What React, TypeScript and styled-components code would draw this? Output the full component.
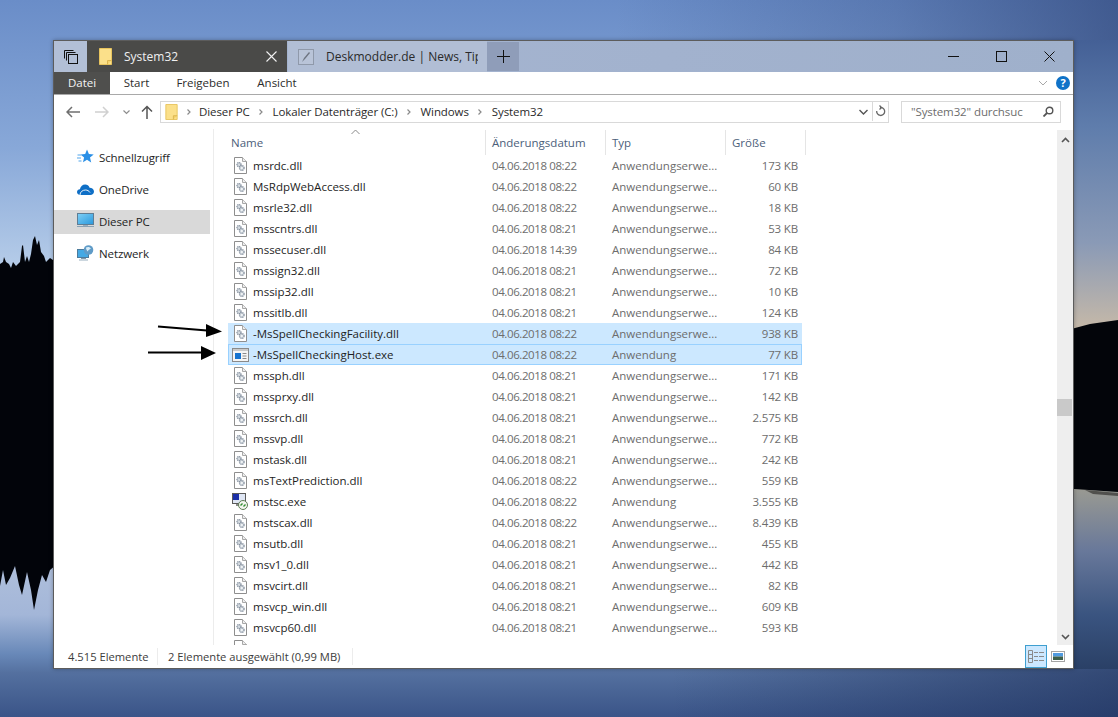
import React from 'react';
import styled, { createGlobalStyle } from 'styled-components';

interface FileRow {
    name: string;
    date: string;
    type: string;
    size: string;
    icon?: 'dll' | 'exe' | 'rdp';
    selected?: boolean;
    focused?: boolean;
}

const DLL = 'Anwendungserwe...';

const files: FileRow[] = [
    {name: 'msrdc.dll', date: '04.06.2018 08:22', type: DLL, size: '173 KB'},
    {name: 'MsRdpWebAccess.dll', date: '04.06.2018 08:22', type: DLL, size: '60 KB'},
    {name: 'msrle32.dll', date: '04.06.2018 08:22', type: DLL, size: '18 KB'},
    {name: 'msscntrs.dll', date: '04.06.2018 08:21', type: DLL, size: '53 KB'},
    {name: 'mssecuser.dll', date: '04.06.2018 14:39', type: DLL, size: '84 KB'},
    {name: 'mssign32.dll', date: '04.06.2018 08:21', type: DLL, size: '72 KB'},
    {name: 'mssip32.dll', date: '04.06.2018 08:21', type: DLL, size: '10 KB'},
    {name: 'mssitlb.dll', date: '04.06.2018 08:21', type: DLL, size: '124 KB'},
    {name: '-MsSpellCheckingFacility.dll', date: '04.06.2018 08:22', type: DLL, size: '938 KB', selected: true},
    {name: '-MsSpellCheckingHost.exe', date: '04.06.2018 08:22', type: 'Anwendung', size: '77 KB', icon: 'exe', selected: true, focused: true},
    {name: 'mssph.dll', date: '04.06.2018 08:21', type: DLL, size: '171 KB'},
    {name: 'mssprxy.dll', date: '04.06.2018 08:21', type: DLL, size: '142 KB'},
    {name: 'mssrch.dll', date: '04.06.2018 08:21', type: DLL, size: '2.575 KB'},
    {name: 'mssvp.dll', date: '04.06.2018 08:21', type: DLL, size: '772 KB'},
    {name: 'mstask.dll', date: '04.06.2018 08:21', type: DLL, size: '242 KB'},
    {name: 'msTextPrediction.dll', date: '04.06.2018 08:22', type: DLL, size: '559 KB'},
    {name: 'mstsc.exe', date: '04.06.2018 08:22', type: 'Anwendung', size: '3.555 KB', icon: 'rdp'},
    {name: 'mstscax.dll', date: '04.06.2018 08:22', type: DLL, size: '8.439 KB'},
    {name: 'msutb.dll', date: '04.06.2018 08:21', type: DLL, size: '455 KB'},
    {name: 'msv1_0.dll', date: '04.06.2018 08:21', type: DLL, size: '442 KB'},
    {name: 'msvcirt.dll', date: '04.06.2018 08:21', type: DLL, size: '82 KB'},
    {name: 'msvcp_win.dll', date: '04.06.2018 08:21', type: DLL, size: '609 KB'},
    {name: 'msvcp60.dll', date: '04.06.2018 08:21', type: DLL, size: '593 KB'},
    {name: 'msvcr100.dll', date: '11.06.2011 04:15', type: DLL, size: '594 KB'},
];

const GlobalStyle = createGlobalStyle`
    html, body {
        margin: 0;
        padding: 0;
        background: #2d4670;
    }
    * {
        box-sizing: border-box;
    }
`;

const Desktop = styled.div`
    position: relative;
    width: 1118px;
    height: 717px;
    overflow: hidden;
    font-family: "Open Sans", "Noto Sans", sans-serif;
    font-size: 11.5px;
    color: #1e1e1e;
`;

const Wallpaper = styled.svg`
    position: absolute;
    inset: 0;
`;

const Window = styled.div`
    position: absolute;
    left: 53px;
    top: 40px;
    width: 1021px;
    height: 629px;
    border: 1px solid #5c5c5c;
    background: #fff;
    display: flex;
    flex-direction: column;
    box-shadow: 0 0 4px rgba(0, 0, 0, 0.3);
`;

const TitleBar = styled.div`
    height: 31px;
    display: flex;
    align-items: stretch;
    background: linear-gradient(90deg, #a7b6d1 0%, #a2b2ce 60%, #9fb0cb 100%);
    flex-shrink: 0;
`;

const TaskButton = styled.div`
    width: 33px;
    display: flex;
    align-items: center;
    justify-content: center;
    background: #b2bfd6;
`;

const Tab = styled.div<{ $active?: boolean }>`
    width: ${p => (p.$active ? '200px' : '199px')};
    margin-right: ${p => (p.$active ? '1px' : '0')};
    display: flex;
    align-items: center;
    padding: ${p => (p.$active ? '0 0 0 12px' : '0 9px 0 10px')};
    background: ${p => (p.$active ? '#4a4a48' : '#b1bed5')};
    color: ${p => (p.$active ? '#f0f0f0' : '#2a2a2a')};
    font-size: 12px;
    white-space: nowrap;
    overflow: hidden;
`;

const TabTitle = styled.span`
    margin-left: 12px;
    flex: 1;
    overflow: hidden;
`;

const TabClose = styled.div`
    width: 32px;
    display: flex;
    justify-content: center;
    flex-shrink: 0;
`;

const NewTab = styled.div`
    width: 32px;
    margin: 1px 0;
    display: flex;
    align-items: center;
    justify-content: center;
    background: #8f9db9;
`;

const WindowButtons = styled.div`
    margin-left: auto;
    display: flex;
`;

const WindowButton = styled.div`
    width: 48px;
    display: flex;
    align-items: center;
    justify-content: center;
`;

const Ribbon = styled.div`
    height: 23px;
    display: flex;
    align-items: stretch;
    border-bottom: 1px solid #a9a9a9;
    flex-shrink: 0;
`;

const RibbonTab = styled.div<{ $file?: boolean; $width: number }>`
    width: ${p => p.$width}px;
    display: flex;
    align-items: center;
    justify-content: center;
    background: ${p => (p.$file ? '#4f4f4d' : 'transparent')};
    color: ${p => (p.$file ? '#f4f4f4' : '#2c2c2c')};
    padding-bottom: 1px;
`;

const RibbonRight = styled.div`
    margin-left: auto;
    display: flex;
    align-items: center;
    gap: 8px;
    padding-right: 3px;
`;

const HelpBadge = styled.div`
    width: 14px;
    height: 14px;
    border-radius: 50%;
    background: #0f72c8;
    color: #fff;
    font-size: 11px;
    font-weight: 700;
    line-height: 14px;
    text-align: center;
`;

const AddressRow = styled.div`
    height: 34px;
    display: flex;
    align-items: flex-start;
    padding-top: 6px;
    flex-shrink: 0;
`;

const NavButtons = styled.div`
    width: 106px;
    height: 22px;
    display: flex;
    align-items: center;
    padding-left: 12px;
    flex-shrink: 0;
`;

const NavSlot = styled.div<{ $width: number }>`
    width: ${p => p.$width}px;
    display: flex;
    justify-content: center;
    flex-shrink: 0;
`;

const UpSlot = styled.div`
    padding-left: 13px;
    display: flex;
`;

const AddressBox = styled.div`
    width: 729px;
    height: 22px;
    border: 1px solid #d9d9d9;
    display: flex;
    align-items: center;
    padding: 0 0 1px 4px;
    flex-shrink: 0;
`;

const Crumb = styled.span`
    color: #2a2a2a;
    white-space: nowrap;
    letter-spacing: -0.1px;
`;

const CrumbSep = styled.span<{ $first?: boolean }>`
    width: ${p => (p.$first ? '21px' : '23px')};
    display: flex;
    justify-content: center;
    flex-shrink: 0;
`;

const AddressTail = styled.div`
    margin-left: auto;
    display: flex;
    align-items: center;
    height: 100%;
`;

const Refresh = styled.div`
    width: 16px;
    height: 100%;
    border-left: 1px solid #d9d9d9;
    margin-left: 4px;
    display: flex;
    align-items: center;
    justify-content: center;
`;

const SearchBox = styled.div`
    width: 160px;
    height: 22px;
    margin-left: 12px;
    border: 1px solid #d9d9d9;
    display: flex;
    align-items: center;
    justify-content: space-between;
    padding: 0 6px 1px 9px;
    color: #6d6d6d;
    letter-spacing: -0.1px;
    flex-shrink: 0;
`;

const Content = styled.div`
    flex: 1;
    min-height: 0;
    display: flex;
`;

const Sidebar = styled.nav`
    width: 160px;
    flex-shrink: 0;
    border-right: 1px solid #ececec;
    padding: 17px 3px 0 0;
    display: flex;
    flex-direction: column;
    gap: 8px;
`;

const NavItem = styled.div<{ $selected?: boolean }>`
    height: 24px;
    display: flex;
    align-items: center;
    padding: 0 0 2px 23px;
    gap: 5px;
    letter-spacing: -0.1px;
    background: ${p => (p.$selected ? '#d9d9d9' : 'transparent')};
`;

const ListPane = styled.div`
    flex: 1;
    min-width: 0;
    position: relative;
    overflow: hidden;
`;

const ListHeader = styled.div`
    height: 26px;
    margin-left: 14px;
    display: grid;
    grid-template-columns: 258px 120px 120px 80px;
    width: 578px;
`;

const HeaderCell = styled.div`
    border-right: 1px solid #e5e5e5;
    margin-top: 1px;
    padding: 5px 0 0 6px;
    color: #4c607a;
`;

const NameHeaderCell = styled(HeaderCell)`
    padding-left: 3px;
`;

const SortCaret = styled.svg`
    position: absolute;
    left: 137px;
    top: 0;
`;

const Row = styled.div<{ $selected?: boolean; $focused?: boolean }>`
    width: 574px;
    height: 21px;
    margin-left: 14px;
    display: grid;
    grid-template-columns: 258px 120px 120px 76px;
    align-items: center;
    white-space: nowrap;
    background: ${p => (p.$selected ? '#cce8ff' : 'transparent')};
    outline: ${p => (p.$focused ? '1px solid #99d1ff' : 'none')};
    outline-offset: -1px;
`;

const NameCell = styled.div`
    display: flex;
    align-items: center;
    padding-left: 6px;
`;

const IconSlot = styled.div`
    width: 19px;
    height: 21px;
    display: flex;
    align-items: center;
    justify-content: flex-start;
    flex-shrink: 0;
`;

const DetailCell = styled.div`
    padding-left: 6px;
    color: #6d6d6d;
`;

const DateCell = styled(DetailCell)`
    letter-spacing: -0.4px;
`;

const SizeCell = styled.div`
    padding-right: 4px;
    text-align: right;
    color: #6d6d6d;
    letter-spacing: -0.15px;
`;

const ScrollBar = styled.div`
    width: 16px;
    flex-shrink: 0;
    margin-top: 1px;
    background: #eeeeee;
    position: relative;
    display: flex;
    flex-direction: column;
    justify-content: space-between;
    align-items: center;
    padding: 7px 0 5px;
`;

const ScrollThumb = styled.div`
    position: absolute;
    left: 0;
    right: 1px;
    top: 269px;
    height: 17px;
    background: #c9c9c9;
`;

const StatusBar = styled.div`
    height: 23px;
    display: flex;
    align-items: center;
    padding-left: 14px;
    color: #3c3c3c;
    font-size: 11.2px;
    flex-shrink: 0;
`;

const StatusText = styled.span<{ $width: number }>`
    width: ${p => p.$width}px;
    white-space: nowrap;
    border-right: 1px solid #ececec;
    line-height: 17px;
`;

const StatusSecond = styled(StatusText)`
    padding-left: 10px;
`;

const ViewButtons = styled.div`
    margin-left: auto;
    height: 100%;
    display: flex;
    align-items: center;
    padding-right: 8px;
`;

const ViewButton = styled.div<{ $active?: boolean }>`
    width: ${p => (p.$active ? '22px' : '18px')};
    height: 23px;
    display: flex;
    align-items: center;
    justify-content: ${p => (p.$active ? 'center' : 'flex-end')};
    background: ${p => (p.$active ? '#cce8ff' : 'transparent')};
    border: ${p => (p.$active ? '1px solid #3f9fd0' : 'none')};
`;

const Overlay = styled.svg`
    position: absolute;
    left: 0;
    top: 0;
    pointer-events: none;
`;

const FolderIcon = ({w = 13, h = 17}: { w?: number; h?: number }) => (
    <svg width={w} height={h} viewBox="0 0 13 17">
        <path d="M0.500 0.500h12v16h-12z" fill="#fbe08a" stroke="#e8c45e"/>
        <path d="M8.500 16.500v-4h4" fill="#f4d16b" stroke="#dcb54e"/>
    </svg>
);

const DllIcon = () => (
    <svg width="13" height="17" viewBox="0 0 13 17">
        <path d="M0.500 0.500h8l4 4v12h-12z" fill="#fff" stroke="#8e8e8e"/>
        <path d="M8.500 0.500v4h4" fill="#eee" stroke="#a8a8a8"/>
        <circle cx="5" cy="7.600" r="2" fill="#d5dce2" stroke="#8792a0" strokeWidth="1.300" strokeDasharray="1.200 0.500"/>
        <circle cx="7.800" cy="11" r="2.300" fill="#dfe5ea" stroke="#8792a0" strokeWidth="1.300" strokeDasharray="1.200 0.500"/>
        <circle cx="7.800" cy="11" r="0.700" fill="#fff"/>
    </svg>
);

const ExeIcon = () => (
    <svg width="17" height="14" viewBox="0 0 17 14" style={{marginLeft: -2}}>
        <rect x="0.500" y="0.500" width="16" height="13" fill="#f5f5f5" stroke="#8a8a8a"/>
        <rect x="1" y="1" width="15" height="2" fill="#c9c9c9"/>
        <rect x="3" y="5" width="6" height="6" fill="#1573d0"/>
        <path d="M10.500 5.500h4M10.500 8h4M10.500 10.500h4" stroke="#8a8a8a"/>
    </svg>
);

const RdpIcon = () => (
    <svg width="16" height="17" viewBox="0 0 16 17" style={{marginLeft: -2}}>
        <rect x="0.500" y="0.500" width="13" height="10" fill="#dfe6f4" stroke="#5a5a5a"/>
        <rect x="1" y="1" width="6" height="6" fill="#1b2fa8"/>
        <rect x="4" y="11" width="6" height="2" fill="#8a8a8a"/>
        <circle cx="11" cy="12" r="4.500" fill="#f4f6ef" stroke="#5d7f53"/>
        <path d="M8.500 12.500l2-2M13.500 11.500l-2 2" stroke="#2f8f2f" strokeWidth="1.400"/>
    </svg>
);

const StarIcon = () => (
    <svg width="17" height="16" viewBox="0 0 17 16">
        <path d="M10 0.500l1.900 4.600 4.800.4-3.700 3.100 1.200 4.800L10 10.700 6 13.200l1.100-4.700-3.600-3 4.700-.4z" fill="#2a8fe6"/>
        <path d="M0.500 6h4M0 9h4M1.500 12h3" stroke="#8cc4f2" strokeWidth="1.300"/>
    </svg>
);

const CloudIcon = () => (
    <svg width="17" height="11" viewBox="0 0 17 11">
        <path d="M3.400 11C1.400 11 0 9.800 0 8.100 0 6.400 1.300 5.300 2.900 5.200 3.600 2.400 5.600 0.600 8.200 0.600c2 0 3.700 1.200 4.400 3.200 2.400 0 4.400 1.600 4.400 3.700 0 2-1.600 3.500-3.700 3.500z" fill="#0f6fc6"/>
        <path d="M3 11c0-3 2.500-5 5.500-5 2 0 3.500 1 4.500 2.500" fill="none" stroke="#fff" strokeWidth="0.900"/>
    </svg>
);

const PcIcon = () => (
    <svg width="17" height="16" viewBox="0 0 17 16">
        <defs>
            <linearGradient id="pcScreen" x1="0" y1="0" x2="1" y2="1">
                <stop offset="0" stopColor="#7fd0f6"/>
                <stop offset="1" stopColor="#2a98dc"/>
            </linearGradient>
        </defs>
        <rect x="0.500" y="0.500" width="16" height="11" fill="url(#pcScreen)" stroke="#5f7d94"/>
        <rect x="0" y="13" width="17" height="1" fill="#8aa1b3"/>
        <rect x="6" y="12" width="5" height="1" fill="#9aaebc"/>
    </svg>
);

const NetIcon = () => (
    <svg width="17" height="16" viewBox="0 0 17 16">
        <rect x="0.500" y="4.500" width="11" height="8" fill="#45a9e4" stroke="#4d7b9b"/>
        <rect x="4" y="13" width="5" height="1" fill="#7f97a9"/>
        <rect x="2" y="14.500" width="9" height="1" fill="#9ab0bf"/>
        <circle cx="11.500" cy="5" r="4.800" fill="#5f9bc7"/>
        <path d="M9 2.500c2-1 4-.5 5 1-1 1-3 1-3 3-1-.5-2-2-2-4z" fill="#d7ecf8"/>
    </svg>
);

const Chevron = ({color = '#8a8a8a'}: { color?: string }) => (
    <svg width="6" height="8" viewBox="0 0 6 8">
        <path d="M1.500 1.500L4 4 1.500 6.500" fill="none" stroke={color} strokeWidth="1.200"/>
    </svg>
);

const FileIcon = ({kind}: { kind?: FileRow['icon'] }) => {
    if (kind === 'exe') return <ExeIcon/>;
    if (kind === 'rdp') return <RdpIcon/>;
    return <DllIcon/>;
};

const crumbs = ['Dieser PC', 'Lokaler Datenträger (C:)', 'Windows', 'System32'];

const App = () => (
    <Desktop>
        <GlobalStyle/>
        <Wallpaper width="1118" height="717" viewBox="0 0 1118 717">
            <defs>
                <linearGradient id="sky" x1="0" y1="0" x2="0" y2="1">
                    <stop offset="0" stopColor="#6a8dc8"/>
                    <stop offset="0.45" stopColor="#88a8d8"/>
                    <stop offset="0.8" stopColor="#b4cbe8"/>
                    <stop offset="1" stopColor="#d8e2ee"/>
                </linearGradient>
                <linearGradient id="skyShade" x1="0" y1="0" x2="1" y2="0">
                    <stop offset="0.55" stopColor="#24386a" stopOpacity="0"/>
                    <stop offset="0.8" stopColor="#24386a" stopOpacity="0.25"/>
                    <stop offset="1" stopColor="#24386a" stopOpacity="0.6"/>
                </linearGradient>
                <linearGradient id="rightSky" x1="0" y1="0" x2="0" y2="1">
                    <stop offset="0" stopColor="#446096"/>
                    <stop offset="0.3" stopColor="#5f7dac"/>
                    <stop offset="0.7" stopColor="#8a9ab6"/>
                    <stop offset="1" stopColor="#c6b9a8"/>
                </linearGradient>
                <linearGradient id="water" x1="0" y1="0" x2="0" y2="1">
                    <stop offset="0" stopColor="#b0c0dc"/>
                    <stop offset="0.35" stopColor="#a3b6d8"/>
                    <stop offset="0.6" stopColor="#6888b8"/>
                    <stop offset="0.72" stopColor="#54709f"/>
                    <stop offset="1" stopColor="#3a5488"/>
                </linearGradient>
                <linearGradient id="rightWater" x1="0" y1="0" x2="0" y2="1">
                    <stop offset="0" stopColor="#9a9a92"/>
                    <stop offset="0.35" stopColor="#68789a"/>
                    <stop offset="0.7" stopColor="#3a5480"/>
                    <stop offset="1" stopColor="#2a4066"/>
                </linearGradient>
                <linearGradient id="bottomShade" x1="0" y1="0" x2="1" y2="0">
                    <stop offset="0.6" stopColor="#1c2e58" stopOpacity="0"/>
                    <stop offset="1" stopColor="#1c2e58" stopOpacity="0.6"/>
                </linearGradient>
            </defs>
            <rect width="1118" height="330" fill="url(#sky)"/>
            <rect width="1118" height="330" fill="url(#skyShade)"/>
            <rect x="1074" y="40" width="44" height="290" fill="url(#rightSky)"/>
            <rect y="560" width="1118" height="157" fill="url(#water)"/>
            <rect y="620" width="1118" height="97" fill="url(#bottomShade)"/>
            <rect x="1074" y="488" width="44" height="181" fill="url(#rightWater)"/>
            <path d="M0 264L3 262 4 257 6 262 9 264 11 268 13 262 16 266 20 262 22 246 23 245 25 262 27 256 29 262 31 254 33 240 35 236 37 245 39 240 41 252 44 256 46 262 50 258 56 262V565L50 570 46 582 42 575 38 590 34 610 31 590 27 572 22 595 19 585 15 566 10 578 6 585 3 570 0 586z" fill="#02040a"/>
            <path d="M1060 332l30-8 28-4v172l-58-4z" fill="#03050a"/>
            <path d="M1085 490l33 3v3l-25-2z" fill="#23221f" opacity="0.6"/>
        </Wallpaper>
        <Window>
            <TitleBar>
                <TaskButton>
                    <svg width="16" height="16" viewBox="0 0 16 16" fill="none" stroke="#111" strokeWidth="1">
                        <path d="M1.500 9.500v-8h9M3.500 11.500v-8h9"/>
                        <rect x="5.500" y="5.500" width="9" height="9" fill="#b2bfd6"/>
                    </svg>
                </TaskButton>
                <Tab $active>
                    <FolderIcon/>
                    <TabTitle>System32</TabTitle>
                    <TabClose>
                        <svg width="11" height="11" viewBox="0 0 11 11" stroke="#f2f2f2" strokeWidth="1.100">
                            <path d="M0.500 0.500l10 10M10.500 0.500l-10 10"/>
                        </svg>
                    </TabClose>
                </Tab>
                <Tab>
                    <svg width="16" height="16" viewBox="0 0 16 16" style={{flexShrink: 0}}>
                        <rect x="0.500" y="0.500" width="15" height="15" fill="#b9c4d8" stroke="#8f99aa"/>
                        <path d="M4 13l2-4 5-6 1 1-5 6z" fill="#6d7480"/>
                    </svg>
                    <TabTitle>Deskmodder.de | News, Tipps</TabTitle>
                </Tab>
                <NewTab>
                    <svg width="13" height="13" viewBox="0 0 13 13" stroke="#111" strokeWidth="1">
                        <path d="M6.500 0v13M0 6.500h13"/>
                    </svg>
                </NewTab>
                <WindowButtons>
                    <WindowButton>
                        <svg width="11" height="11" viewBox="0 0 11 11" stroke="#111">
                            <path d="M0 5.500h11"/>
                        </svg>
                    </WindowButton>
                    <WindowButton>
                        <svg width="11" height="11" viewBox="0 0 11 11" fill="none" stroke="#111">
                            <rect x="0.500" y="0.500" width="10" height="10"/>
                        </svg>
                    </WindowButton>
                    <WindowButton>
                        <svg width="11" height="11" viewBox="0 0 11 11" stroke="#111">
                            <path d="M0.500 0.500l10 10M10.500 0.500l-10 10"/>
                        </svg>
                    </WindowButton>
                </WindowButtons>
            </TitleBar>
            <Ribbon>
                <RibbonTab $file $width={56}>Datei</RibbonTab>
                <RibbonTab $width={53}>Start</RibbonTab>
                <RibbonTab $width={80}>Freigeben</RibbonTab>
                <RibbonTab $width={68}>Ansicht</RibbonTab>
                <RibbonRight>
                    <svg width="10" height="6" viewBox="0 0 10 6" fill="none" stroke="#a8a8a8">
                        <path d="M1 1l4 4 4-4"/>
                    </svg>
                    <HelpBadge>?</HelpBadge>
                </RibbonRight>
            </Ribbon>
            <AddressRow>
                <NavButtons>
                    <NavSlot $width={14}>
                        <svg width="14" height="12" viewBox="0 0 14 12" fill="none" stroke="#6f6f6f" strokeWidth="1.500">
                            <path d="M14 6H1.500M6 1L1 6l5 5"/>
                        </svg>
                    </NavSlot>
                    <NavSlot $width={44}>
                        <svg width="14" height="12" viewBox="0 0 14 12" fill="none" stroke="#d0d0d0" strokeWidth="1.500">
                            <path d="M0 6h12.500M8 1l5 5-5 5"/>
                        </svg>
                    </NavSlot>
                    <NavSlot $width={4}>
                        <svg width="7" height="5" viewBox="0 0 7 5" fill="none" stroke="#8d8d8d" strokeWidth="1.200" style={{flexShrink: 0}}>
                            <path d="M0.500 0.500l3 3 3-3"/>
                        </svg>
                    </NavSlot>
                    <UpSlot>
                        <svg width="12" height="14" viewBox="0 0 12 14" fill="none" stroke="#555" strokeWidth="1.500">
                            <path d="M6 14V1.500M1 6.500l5-5 5 5"/>
                        </svg>
                    </UpSlot>
                </NavButtons>
                <AddressBox>
                    <FolderIcon w={13} h={16}/>
                    <CrumbSep $first><Chevron/></CrumbSep>
                    {crumbs.map((c, i) => (
                        <React.Fragment key={c}>
                            {i > 0 && <CrumbSep><Chevron/></CrumbSep>}
                            <Crumb>{c}</Crumb>
                        </React.Fragment>
                    ))}
                    <AddressTail>
                        <svg width="9" height="6" viewBox="0 0 9 6" fill="none" stroke="#555" strokeWidth="1.400">
                            <path d="M0.500 1l4 4 4-4"/>
                        </svg>
                        <Refresh>
                            <svg width="11" height="13" viewBox="0 0 11 13" fill="none" stroke="#666" strokeWidth="1.300">
                                <path d="M5 2.500h1a4 4 0 1 1-4.300 3.500M4.500 0.500L6.500 2.500 4.500 4.500"/>
                            </svg>
                        </Refresh>
                    </AddressTail>
                </AddressBox>
                <SearchBox>
                    <span>"System32" durchsuc</span>
                    <svg width="11" height="11" viewBox="0 0 11 11" fill="none" stroke="#555" strokeWidth="1.400">
                        <circle cx="6.500" cy="4.500" r="3.300"/>
                        <path d="M4 7l-3.500 3.500" strokeWidth="1.800"/>
                    </svg>
                </SearchBox>
            </AddressRow>
            <Content>
                <Sidebar>
                    <NavItem><StarIcon/>Schnellzugriff</NavItem>
                    <NavItem><CloudIcon/>OneDrive</NavItem>
                    <NavItem $selected><PcIcon/>Dieser PC</NavItem>
                    <NavItem><NetIcon/>Netzwerk</NavItem>
                </Sidebar>
                <ListPane>
                    <SortCaret width="9" height="6" viewBox="0 0 9 6" fill="none" stroke="#8a8a8a">
                        <path d="M0.500 5l4-4 4 4"/>
                    </SortCaret>
                    <ListHeader>
                        <NameHeaderCell>Name</NameHeaderCell>
                        <HeaderCell>Änderungsdatum</HeaderCell>
                        <HeaderCell>Typ</HeaderCell>
                        <HeaderCell>Größe</HeaderCell>
                    </ListHeader>
                    {files.map(f => (
                        <Row key={f.name} $selected={f.selected} $focused={f.focused}>
                            <NameCell>
                                <IconSlot><FileIcon kind={f.icon}/></IconSlot>
                                {f.name}
                            </NameCell>
                            <DateCell>{f.date}</DateCell>
                            <DetailCell>{f.type}</DetailCell>
                            <SizeCell>{f.size}</SizeCell>
                        </Row>
                    ))}
                </ListPane>
                <ScrollBar>
                    <svg width="9" height="6" viewBox="0 0 9 6" fill="none" stroke="#555" strokeWidth="1.600">
                        <path d="M1 5l3.500-3.500L8 5"/>
                    </svg>
                    <ScrollThumb/>
                    <svg width="9" height="6" viewBox="0 0 9 6" fill="none" stroke="#555" strokeWidth="1.600">
                        <path d="M1 1l3.500 3.500L8 1"/>
                    </svg>
                </ScrollBar>
            </Content>
            <StatusBar>
                <StatusText $width={90}>4.515 Elemente</StatusText>
                <StatusSecond $width={195}>2 Elemente ausgewählt (0,99 MB)</StatusSecond>
                <ViewButtons>
                    <ViewButton $active>
                        <svg width="17" height="13" viewBox="0 0 17 13" fill="none" stroke="#8a8a8a">
                            <path d="M0.500 0.500h4v12h-4zM0.500 4.500h4M0.500 8.500h4"/>
                            <path d="M6 2.500h4M11 2.500h5M6 6.500h4M11 6.500h5M6 10.500h4M11 10.500h5"/>
                        </svg>
                    </ViewButton>
                    <ViewButton>
                        <svg width="14" height="11" viewBox="0 0 14 11">
                            <rect x="0.500" y="0.500" width="13" height="10" fill="#fff" stroke="#a5a5a5"/>
                            <rect x="2" y="2" width="10" height="3.500" fill="#4f9ae0"/>
                            <rect x="2" y="5.500" width="10" height="3.500" fill="#3d5f4a"/>
                        </svg>
                    </ViewButton>
                </ViewButtons>
            </StatusBar>
        </Window>
        <Overlay width="1118" height="717" viewBox="0 0 1118 717">
            <path d="M158 326.500L207 330.500" stroke="#000" strokeWidth="2"/>
            <path d="M206 324L222 331.500 206 337z" fill="#000"/>
            <path d="M148 352.500H202" stroke="#000" strokeWidth="2"/>
            <path d="M201 346L216 353 201 360z" fill="#000"/>
        </Overlay>
    </Desktop>
);

export default App;
